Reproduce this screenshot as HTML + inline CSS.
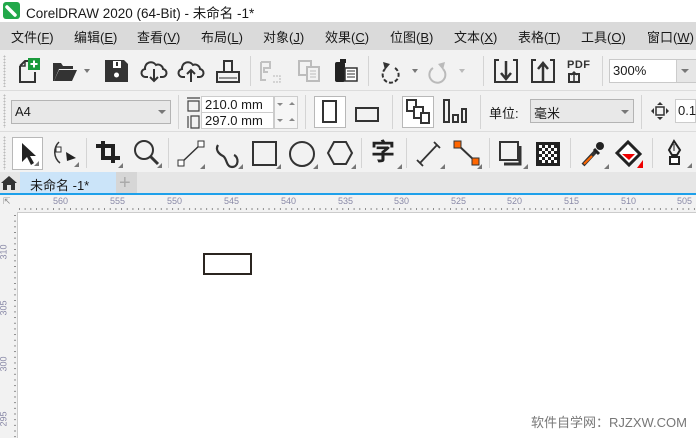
<!DOCTYPE html>
<html><head><meta charset="utf-8">
<style>
*{margin:0;padding:0;box-sizing:border-box}
body{width:696px;height:438px;overflow:hidden;position:relative;background:#f2f2f2;font-family:"Liberation Sans","Noto Sans CJK SC",sans-serif;color:#1a1a1a}
.a{position:absolute}
.t{font-size:13px;white-space:nowrap}
svg{position:absolute;overflow:visible}
.grip{position:absolute;width:3px;background-image:radial-gradient(#bbb 0.8px,transparent 0.9px);background-size:3px 3px}
.sep{position:absolute;width:1px;background:#d4d4d4}
.rl{position:absolute;font-size:9px;color:#8a8aa8;font-family:"Liberation Sans",sans-serif}
.tri{position:absolute;width:0;height:0;border-left:5px solid transparent;border-bottom:5px solid #555}
</style></head><body>
<!-- title bar -->
<div class="a" style="left:0;top:0;width:696px;height:22px;background:#fff"></div>
<div class="a" style="left:3px;top:2px;width:17px;height:17px;background:#22a84a;border-radius:3px"></div>
<svg style="left:3px;top:2px" width="17" height="17"><path d="M4 5 L12 13" stroke="#fff" stroke-width="3.5" stroke-linecap="round"/></svg>
<div class="a t" style="left:26px;top:2px;font-size:13.5px">CorelDRAW 2020 (64-Bit) - 未命名 -1*</div>
<!-- menu -->
<div class="a" style="left:0;top:22px;width:696px;height:28px;background:#dadada"></div>
<div class="a t" style="left:11px;top:27px">文件(<u>F</u>)</div>
<div class="a t" style="left:74px;top:27px">编辑(<u>E</u>)</div>
<div class="a t" style="left:137px;top:27px">查看(<u>V</u>)</div>
<div class="a t" style="left:201px;top:27px">布局(<u>L</u>)</div>
<div class="a t" style="left:263px;top:27px">对象(<u>J</u>)</div>
<div class="a t" style="left:325px;top:27px">效果(<u>C</u>)</div>
<div class="a t" style="left:390px;top:27px">位图(<u>B</u>)</div>
<div class="a t" style="left:454px;top:27px">文本(<u>X</u>)</div>
<div class="a t" style="left:518px;top:27px">表格(<u>T</u>)</div>
<div class="a t" style="left:581px;top:27px">工具(<u>O</u>)</div>
<div class="a t" style="left:647px;top:27px">窗口(<u>W</u>)</div>
<!-- toolbar 1 -->
<div class="grip" style="left:3px;top:55px;height:32px"></div>
<svg style="left:14px;top:58px" width="30" height="26"><path d="M6 8 L11 3 H19 M6 8 V24 H21 V14" fill="none" stroke="#333" stroke-width="2"/><path d="M11 3 V8 H6" fill="none" stroke="#333" stroke-width="1.5"/><rect x="14" y="0" width="12" height="12" fill="#1a9a3c"/><path d="M20 2.5 V9.5 M16.5 6 H23.5" stroke="#fff" stroke-width="2"/></svg>
<svg style="left:51px;top:59px" width="40" height="24"><path d="M2 4 H10 L12 7 H22 V10 H8 L3 22 H2 Z" fill="#333"/><path d="M8 11 H26 L21 22 H3 Z" fill="#333"/><path d="M33 10 L39 10 L36 14 Z" fill="#777"/></svg>
<svg style="left:104px;top:59px" width="26" height="24"><path d="M1 1 H20 L24 5 V23 H1 Z" fill="#333"/><rect x="9" y="2" width="8" height="7" fill="#fff"/><rect x="12" y="3" width="2" height="4" fill="#333"/><circle cx="12.5" cy="16" r="2.5" fill="#fff"/></svg>
<svg style="left:141px;top:58px" width="26" height="26"><path d="M7 19 H5 A4 4 0 0 1 4 11 A6 6 0 0 1 15 7 A5 5 0 0 1 22 11 A4 4 0 0 1 21 19 H19" fill="none" stroke="#333" stroke-width="2"/><path d="M13 11 V23 M9 19 L13 23 L17 19" fill="none" stroke="#333" stroke-width="2"/></svg>
<svg style="left:178px;top:58px" width="26" height="26"><path d="M7 19 H5 A4 4 0 0 1 4 11 A6 6 0 0 1 15 7 A5 5 0 0 1 22 11 A4 4 0 0 1 21 19 H19" fill="none" stroke="#333" stroke-width="2"/><path d="M13 24 V12 M9 16 L13 12 L17 16" fill="none" stroke="#333" stroke-width="2"/></svg>
<svg style="left:215px;top:58px" width="26" height="26"><path d="M9 14 V3 H17 V14 M2 14 H24 V24 H2 Z" fill="none" stroke="#333" stroke-width="2"/><path d="M4 20 H22" stroke="#333" stroke-width="1"/></svg>
<div class="sep" style="left:250px;top:56px;height:30px"></div>
<svg style="left:258px;top:60px" width="30" height="24" opacity="0.45"><path d="M3 2 H12 V8 H6 V12 H10 M3 2 V20 H8" fill="none" stroke="#888" stroke-width="2"/><path d="M15 16 H22 V22 H15" fill="none" stroke="#999" stroke-width="1.5" stroke-dasharray="2 1"/></svg>
<svg style="left:297px;top:59px" width="30" height="24" opacity="0.5"><rect x="2" y="2" width="12" height="14" fill="none" stroke="#888" stroke-width="2"/><rect x="10" y="8" width="12" height="14" fill="#f2f2f2" stroke="#888" stroke-width="2"/><path d="M13 12 H19 M13 15 H19 M13 18 H19" stroke="#888"/></svg>
<svg style="left:333px;top:58px" width="28" height="26"><rect x="2" y="4" width="10" height="20" rx="2" fill="#222"/><rect x="7" y="1" width="6" height="4" fill="#222"/><rect x="12" y="10" width="12" height="13" fill="#fff" stroke="#333" stroke-width="1.5"/><path d="M14 13 H22 M14 16 H22 M14 19 H22" stroke="#333"/></svg>
<div class="sep" style="left:368px;top:56px;height:30px"></div>
<svg style="left:378px;top:58px" width="42" height="28"><path d="M17 10 A8 8 0 1 1 7 11" fill="none" stroke="#333" stroke-width="2" stroke-dasharray="4 2"/><path d="M5 4 L12 6 L7 12 Z" fill="#333"/><path d="M34 11 L40 11 L37 15 Z" fill="#777"/></svg>
<svg style="left:425px;top:58px" width="42" height="28" opacity="0.35"><path d="M8 10 A8 8 0 1 0 18 11" fill="none" stroke="#555" stroke-width="2"/><path d="M20 4 L13 6 L18 12 Z" fill="#555"/><path d="M34 11 L40 11 L37 15 Z" fill="#555"/></svg>
<div class="sep" style="left:483px;top:56px;height:30px"></div>
<svg style="left:493px;top:58px" width="26" height="26"><path d="M6 2 H2 V24 H24 V2 H20" fill="none" stroke="#333" stroke-width="2"/><path d="M13 3 V20 M8 15 L13 21 L18 15" fill="none" stroke="#333" stroke-width="2.5"/></svg>
<svg style="left:530px;top:58px" width="26" height="26"><path d="M6 2 H2 V24 H24 V2 H20" fill="none" stroke="#333" stroke-width="2"/><path d="M13 23 V6 M8 11 L13 5 L18 11" fill="none" stroke="#333" stroke-width="2.5"/></svg>
<div class="a" style="left:567px;top:59px;font-size:11px;font-weight:bold;color:#333;letter-spacing:0.5px">PDF</div>
<svg style="left:568px;top:71px" width="14" height="12"><rect x="1" y="3" width="10" height="8" fill="none" stroke="#333" stroke-width="2"/><path d="M6 10 V1 M3 4 L6 1 L9 4" stroke="#333" stroke-width="1.5" fill="none"/></svg>
<div class="sep" style="left:602px;top:56px;height:30px"></div>
<div class="a" style="left:609px;top:59px;width:87px;height:24px;background:#fff;border:1px solid #c9c9c9"></div>
<div class="a t" style="left:613px;top:63px;font-size:13px">300%</div>
<div class="a" style="left:676px;top:60px;width:20px;height:22px;background:#e6e6e6;border-left:1px solid #ccc"></div>
<div class="a" style="left:681px;top:69px;border-left:4px solid transparent;border-right:4px solid transparent;border-top:4px solid #777"></div>
<div class="a" style="left:0;top:90px;width:696px;height:1px;background:#dcdcdc"></div>
<!-- property bar -->
<div class="grip" style="left:3px;top:94px;height:34px"></div>
<div class="a" style="left:11px;top:100px;width:160px;height:24px;background:#e8e8e8;border:1px solid #b4b4b4"></div>
<div class="a t" style="left:15px;top:104px">A4</div>
<div class="a" style="left:158px;top:110px;border-left:4px solid transparent;border-right:4px solid transparent;border-top:4px solid #777"></div>
<div class="sep" style="left:178px;top:95px;height:34px"></div>
<svg style="left:186px;top:96px" width="16" height="34"><path d="M1 2 H14 M2 5 H13 V15 H2 Z" fill="none" stroke="#444" stroke-width="1.2"/><path d="M2 20 V32 M5 20 H13 V32 H5 Z" fill="none" stroke="#444" stroke-width="1.2"/></svg>
<div class="a" style="left:201px;top:96px;width:73px;height:17px;background:#fff;border:1px solid #ccc"></div>
<div class="a" style="left:201px;top:112px;width:73px;height:17px;background:#fff;border:1px solid #ccc"></div>
<div class="a t" style="left:205px;top:97px">210.0 mm</div>
<div class="a t" style="left:205px;top:113px">297.0 mm</div>
<div class="a" style="left:274px;top:96px;width:24px;height:33px;background:#f6f6f6;border:1px solid #ccc"></div>
<div class="a" style="left:277px;top:103px;border-left:3px solid transparent;border-right:3px solid transparent;border-top:3px solid #888"></div>
<div class="a" style="left:289px;top:102px;border-left:3px solid transparent;border-right:3px solid transparent;border-bottom:3px solid #888"></div>
<div class="a" style="left:277px;top:119px;border-left:3px solid transparent;border-right:3px solid transparent;border-top:3px solid #888"></div>
<div class="a" style="left:289px;top:118px;border-left:3px solid transparent;border-right:3px solid transparent;border-bottom:3px solid #888"></div>
<div class="sep" style="left:305px;top:95px;height:34px"></div>
<div class="a" style="left:314px;top:96px;width:32px;height:32px;background:#fff;border:1px solid #b8b8b8"></div>
<div class="a" style="left:322px;top:100px;width:15px;height:23px;border:2px solid #333"></div>
<div class="a" style="left:355px;top:107px;width:24px;height:15px;border:2px solid #333"></div>
<div class="sep" style="left:392px;top:95px;height:34px"></div>
<div class="a" style="left:402px;top:96px;width:32px;height:32px;background:#fff;border:1px solid #b8b8b8"></div>
<svg style="left:405px;top:98px" width="28" height="28"><rect x="2" y="2" width="9" height="11" fill="#fff" stroke="#333" stroke-width="2"/><rect x="9" y="9" width="9" height="11" fill="#fff" stroke="#333" stroke-width="2"/><rect x="16" y="15" width="8" height="10" fill="#fff" stroke="#333" stroke-width="2"/></svg>
<svg style="left:441px;top:98px" width="28" height="28"><rect x="3" y="2" width="5" height="22" fill="none" stroke="#333" stroke-width="2"/><rect x="12" y="17" width="5" height="7" fill="none" stroke="#333" stroke-width="2"/><rect x="21" y="11" width="4" height="13" fill="none" stroke="#333" stroke-width="2"/></svg>
<div class="sep" style="left:480px;top:95px;height:34px"></div>
<div class="a t" style="left:489px;top:103px">单位:</div>
<div class="a" style="left:530px;top:99px;width:104px;height:24px;background:#e8e8e8;border:1px solid #b4b4b4"></div>
<div class="a t" style="left:534px;top:103px">毫米</div>
<div class="a" style="left:621px;top:110px;border-left:4px solid transparent;border-right:4px solid transparent;border-top:4px solid #777"></div>
<div class="sep" style="left:641px;top:95px;height:34px"></div>
<svg style="left:651px;top:102px" width="18" height="18"><rect x="5" y="5" width="8" height="8" fill="none" stroke="#333" stroke-width="1.5"/><path d="M9 0 L12 3 H6 Z M9 18 L12 15 H6 Z M0 9 L3 6 V12 Z M18 9 L15 6 V12 Z" fill="#333"/></svg>
<div class="a" style="left:675px;top:99px;width:21px;height:24px;background:#fff;border:1px solid #ccc"></div>
<div class="a t" style="left:678px;top:103px">0.1</div>
<div class="a" style="left:0;top:131px;width:696px;height:1px;background:#dcdcdc"></div>
<!-- toolbox -->
<div class="grip" style="left:3px;top:136px;height:34px"></div>
<div class="a" style="left:12px;top:137px;width:31px;height:33px;background:#fff;border:1px solid #b8b8b8"></div>
<svg style="left:20px;top:142px" width="22" height="26"><path d="M2 1 L2 20 L7 15 L11 23 L14 21 L10 14 L16 14 Z" fill="#222"/><path d="M14 24 L19 24 L19 19 Z" fill="#777"/></svg>
<svg style="left:52px;top:141px" width="28" height="28"><path d="M7 1 A14 14 0 0 0 8 22" fill="none" stroke="#333" stroke-width="1.5"/><rect x="4" y="6" width="5" height="5" fill="#fff" stroke="#333"/><path d="M14 11 L24 17 L15 20 Z" fill="#222"/><path d="M22 26 L27 26 L27 21 Z" fill="#777"/></svg>
<div class="sep" style="left:86px;top:138px;height:30px"></div>
<svg style="left:95px;top:140px" width="30" height="30"><path d="M8 1 V18 H25 M1 6 H18 V23" fill="none" stroke="#222" stroke-width="4"/><path d="M23 28 L28 28 L28 23 Z" fill="#777"/></svg>
<svg style="left:133px;top:139px" width="30" height="30"><circle cx="11" cy="11" r="9" fill="none" stroke="#333" stroke-width="2"/><path d="M17 17 L25 25" stroke="#333" stroke-width="3"/><path d="M24 29 L29 29 L29 24 Z" fill="#777"/></svg>
<div class="sep" style="left:168px;top:138px;height:30px"></div>
<svg style="left:177px;top:140px" width="30" height="30"><path d="M4 23 L24 4" stroke="#333" stroke-width="1.5"/><rect x="1" y="20" width="6" height="6" fill="#fff" stroke="#333"/><rect x="21" y="1" width="6" height="6" fill="#fff" stroke="#333"/><path d="M23 29 L28 29 L28 24 Z" fill="#777"/></svg>
<svg style="left:214px;top:140px" width="30" height="30"><path d="M4 5 C1 10 5 14 9 16 C13 18 12 27 18 27 C25 27 25 17 20 15" fill="none" stroke="#333" stroke-width="2.2"/><path d="M24 29 L29 29 L29 24 Z" fill="#777"/></svg>
<svg style="left:252px;top:141px" width="30" height="30"><rect x="1" y="1" width="23" height="23" fill="none" stroke="#333" stroke-width="2"/><path d="M24 28 L29 28 L29 23 Z" fill="#777"/></svg>
<svg style="left:289px;top:141px" width="30" height="30"><circle cx="13" cy="13" r="12" fill="none" stroke="#333" stroke-width="2"/><path d="M24 28 L29 28 L29 23 Z" fill="#777"/></svg>
<svg style="left:327px;top:141px" width="30" height="30"><path d="M7 1 H19 L25 12 L19 23 H7 L1 12 Z" fill="none" stroke="#333" stroke-width="2"/><path d="M24 28 L29 28 L29 23 Z" fill="#777"/></svg>
<div class="sep" style="left:361px;top:138px;height:30px"></div>
<div class="a" style="left:371px;top:139px;font-size:24px;font-weight:bold;color:#222;line-height:28px">字</div>
<svg style="left:373px;top:141px" width="30" height="30"><path d="M24 28 L29 28 L29 23 Z" fill="#777"/></svg>
<div class="sep" style="left:406px;top:138px;height:30px"></div>
<svg style="left:416px;top:141px" width="30" height="30"><path d="M4 22 L21 4 M1 19 L7 25 M18 1 L24 7" stroke="#333" stroke-width="1.8"/><path d="M24 28 L29 28 L29 23 Z" fill="#777"/></svg>
<svg style="left:453px;top:141px" width="30" height="30"><path d="M5 4 L22 20" stroke="#333" stroke-width="2"/><rect x="1" y="0" width="7" height="7" fill="#f60" stroke="#333"/><rect x="19" y="17" width="7" height="7" fill="#f60" stroke="#333"/><path d="M24 28 L29 28 L29 23 Z" fill="#777"/></svg>
<div class="sep" style="left:489px;top:138px;height:30px"></div>
<svg style="left:499px;top:141px" width="30" height="30"><rect x="1" y="1" width="18" height="18" fill="none" stroke="#333" stroke-width="2"/><path d="M21 5 V23 H5" fill="none" stroke="#333" stroke-width="3"/><path d="M24 28 L29 28 L29 23 Z" fill="#777"/></svg>
<svg style="left:536px;top:142px" width="26" height="26"><rect x="0" y="0" width="24" height="24" fill="#222"/><g fill="#fff"><rect x="3" y="3" width="3" height="3"/><rect x="9" y="3" width="3" height="3"/><rect x="15" y="3" width="3" height="3"/><rect x="6" y="6" width="3" height="3"/><rect x="12" y="6" width="3" height="3"/><rect x="18" y="6" width="3" height="3"/><rect x="3" y="9" width="3" height="3"/><rect x="9" y="9" width="3" height="3"/><rect x="15" y="9" width="3" height="3"/><rect x="6" y="12" width="3" height="3"/><rect x="12" y="12" width="3" height="3"/><rect x="18" y="12" width="3" height="3"/><rect x="3" y="15" width="3" height="3"/><rect x="9" y="15" width="3" height="3"/><rect x="15" y="15" width="3" height="3"/><rect x="6" y="18" width="3" height="3"/><rect x="12" y="18" width="3" height="3"/><rect x="18" y="18" width="3" height="3"/></g></svg>
<div class="sep" style="left:570px;top:138px;height:30px"></div>
<svg style="left:580px;top:141px" width="30" height="30"><path d="M3 24 L16 10" stroke="#333" stroke-width="4"/><path d="M4 23 L12 15" stroke="#f60" stroke-width="2"/><circle cx="20" cy="5" r="4" fill="#222"/><path d="M14 8 L19 13" stroke="#222" stroke-width="3"/><path d="M24 28 L29 28 L29 23 Z" fill="#777"/></svg>
<svg style="left:615px;top:141px" width="30" height="30"><path d="M2 12 L13 1 L25 13 L14 24 Z" fill="#fff" stroke="#222" stroke-width="3"/><path d="M7 13 H20 L14 19 Z" fill="#e00"/><path d="M22 27 L28 27 L28 19 Z" fill="#e00"/></svg>
<div class="sep" style="left:652px;top:138px;height:30px"></div>
<svg style="left:662px;top:140px" width="30" height="30"><path d="M12 1 L18 10 L15 15 H10 L7 10 Z" fill="none" stroke="#222" stroke-width="2"/><path d="M12 4 V11" stroke="#222"/><rect x="8" y="17" width="9" height="7" fill="#fff" stroke="#222" stroke-width="2"/><path d="M25 28 L30 28 L30 23 Z" fill="#777"/></svg>
<!-- tabs -->
<div class="a" style="left:0;top:172px;width:696px;height:22px;background:#e6e6e6"></div>
<svg style="left:1px;top:175px" width="18" height="16"><path d="M8 1 L0 8 H2 V15 H6 V10 H10 V15 H14 V8 H16 Z" fill="#333"/></svg>
<div class="a" style="left:20px;top:172px;width:96px;height:22px;background:#cbe4f9"></div>
<div class="a t" style="left:30px;top:175px">未命名 -1*</div>
<div class="a" style="left:116px;top:172px;width:21px;height:22px;background:#d6d6d6"></div>
<div class="a" style="left:119px;top:174px;font-size:20px;color:#aaa;line-height:18px">+</div>
<div class="a" style="left:0;top:193px;width:696px;height:2px;background:#1ea0ea"></div>
<!-- rulers -->
<div class="a" style="left:0;top:195px;width:696px;height:18px;background:#f2f2f2"></div>
<div class="a" style="left:0;top:195px;width:17px;height:243px;background:#f2f2f2"></div>
<div class="a" style="left:17px;top:212px;width:679px;height:1px;background:#ccc"></div>
<div class="a" style="left:17px;top:212px;width:1px;height:226px;background:#ccc"></div>
<div class="a" style="left:18px;top:213px;width:678px;height:225px;background:#fff"></div>
<div class="a" style="left:19px;top:208px;width:677px;height:2px;background-image:linear-gradient(90deg,#888 1px,transparent 1px);background-size:5.68px 2px"></div>
<div class="a" style="left:14px;top:215px;width:2px;height:223px;background-image:linear-gradient(#888 1px,transparent 1px);background-size:2px 5.68px"></div>
<div class="rl" style="left:3px;top:196px;color:#888">⇱</div>
<div class="rl" style="left:53px;top:196px">560</div>
<div class="rl" style="left:110px;top:196px">555</div>
<div class="rl" style="left:167px;top:196px">550</div>
<div class="rl" style="left:224px;top:196px">545</div>
<div class="rl" style="left:281px;top:196px">540</div>
<div class="rl" style="left:338px;top:196px">535</div>
<div class="rl" style="left:394px;top:196px">530</div>
<div class="rl" style="left:451px;top:196px">525</div>
<div class="rl" style="left:507px;top:196px">520</div>
<div class="rl" style="left:564px;top:196px">515</div>
<div class="rl" style="left:621px;top:196px">510</div>
<div class="rl" style="left:677px;top:196px">505</div>
<div class="rl" style="left:-4px;top:247px;transform:rotate(-90deg)">310</div>
<div class="rl" style="left:-4px;top:303px;transform:rotate(-90deg)">305</div>
<div class="rl" style="left:-4px;top:359px;transform:rotate(-90deg)">300</div>
<div class="rl" style="left:-4px;top:414px;transform:rotate(-90deg)">295</div>
<!-- rectangle -->
<div class="a" style="left:203px;top:253px;width:49px;height:22px;border:2px solid #2b2520"></div>
<div class="a t" style="left:531px;top:412px;color:#777;font-size:13px">软件自学网：RJZXW.COM</div>
</body></html>
